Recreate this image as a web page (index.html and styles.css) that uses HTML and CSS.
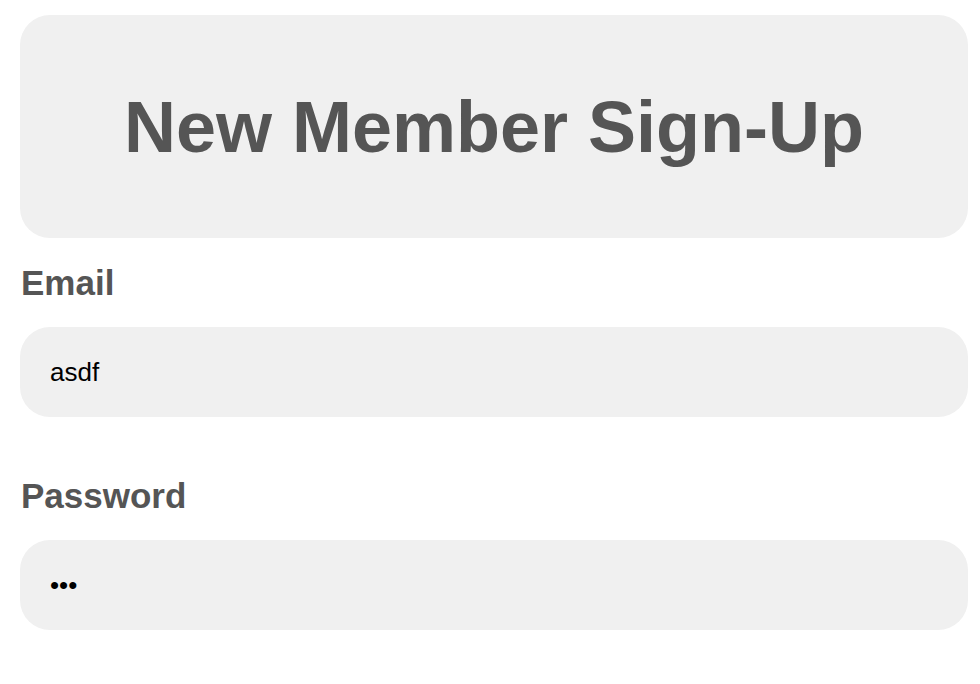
FILE: index.html
```html
<!DOCTYPE html>
<html lang="en">
<head>
<meta charset="utf-8">
<title>New Member Sign-Up</title>
<link rel="stylesheet" href="styles.css">
</head>
<body>
<main class="page">
  <header class="banner">
    <h1 class="banner-title">New Member Sign-Up</h1>
  </header>
  <form class="signup">
    <div class="field">
      <label class="field-label" for="email">Email</label>
      <input class="field-input" id="email" type="text" value="asdf">
    </div>
    <div class="field">
      <label class="field-label" for="password">Password</label>
      <input class="field-input" id="password" type="password" value="abc">
    </div>
  </form>
</main>
</body>
</html>
```

FILE: styles.css
```css
html, body {
  margin: 0;
  padding: 0;
  background: #ffffff;
}

body {
  font-family: "Liberation Sans", Arial, Helvetica, sans-serif;
  color: #555555;
}

.page {
  padding: 15px 12px 0 20px;
}

.banner {
  height: 223px;
  background: #f0f0f0;
  border-radius: 30px;
  display: flex;
  align-items: center;
  justify-content: center;
}

.banner-title {
  margin: 0;
  font-size: 72px;
  font-weight: 700;
  color: #555555;
  line-height: 1.15;
  padding-top: 2px;
}

.signup {
  display: flex;
  flex-direction: column;
  gap: 58px;
  margin-top: 24px;
}

.field {
  display: flex;
  flex-direction: column;
  gap: 24px;
}

.field-label {
  font-size: 35px;
  font-weight: 700;
  color: #555555;
  line-height: 41px;
  padding-left: 1px;
}

.field-input {
  box-sizing: border-box;
  height: 90px;
  width: 100%;
  border: none;
  outline: none;
  border-radius: 30px;
  background: #f0f0f0;
  padding: 0 30px;
  font-family: "Liberation Sans", Arial, Helvetica, sans-serif;
  font-size: 26px;
  color: #000000;
}
```
